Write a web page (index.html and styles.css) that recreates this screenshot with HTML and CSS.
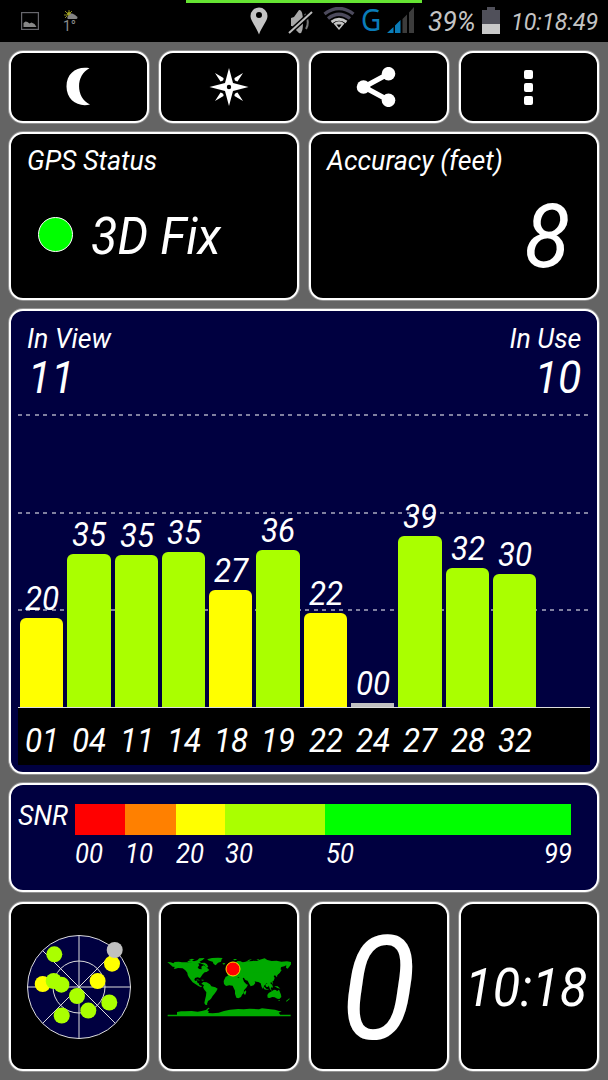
FILE: index.html
```html
<!DOCTYPE html>
<html lang="en">

<head>
    <meta charset="UTF-8">
    <meta name="viewport" content="width=device-width, initial-scale=1.0">
    <title>GPS Test</title>
    <link rel="stylesheet" href="styles.css">
</head>

<body>
    <header class="statusbar">
        <div class="progress"></div>
        <div class="notifications">
            <svg width="18" height="18" viewBox="0 0 18 18">
                <rect x=".6" y=".6" width="16.8" height="16.8" fill="none" stroke="#66666c" stroke-width="1.2"/>
                <path d="M2.500 15v-4l2-1.500 2 .5 2 1.500 2-1 3 1.500 2 3z" fill="#888"/>
            </svg>
            <div class="weather">
                <svg width="14" height="9" viewBox="0 0 14 9">
                    <path d="M5 0v3M1 1l3 3M0 5h3M8 1L6 3M1 8l2-2" stroke="#8d8d20" stroke-width="1"/>
                    <circle cx="5" cy="4" r="2" fill="#a0a020"/>
                    <path d="M4 9a2 2 0 0 1 1-3.500a3 3 0 0 1 5-1a2 2 0 0 1 2 1.500a1.500 1.500 0 0 1 0 3z" fill="#858585"/>
                </svg>
                <span>1°</span>
            </div>
        </div>
        <div class="system">
            <svg class="pin" width="18" height="28" viewBox="0 0 18 28">
                <path fill-rule="evenodd" d="M9 .5A8.500 8.500 0 0 1 17.500 9C17.500 14 11.500 20 9 27.500C6.500 20 .5 14 .5 9A8.500 8.500 0 0 1 9 .5zM9 5a3 3 0 1 0 0 6a3 3 0 0 0 0-6z" fill="#c4c4c4"/>
            </svg>
            <svg class="mute" width="25" height="26" viewBox="0 0 25 26">
                <path d="M3 9l3-1 5-7q4-1 4 12t-4 11l-7-7H3z" fill="#a8a8a8"/>
                <path d="M17 5q5 8 1 15" fill="none" stroke="#777" stroke-width="2"/>
                <path d="M1 24L24 3" stroke="#000" stroke-width="5"/>
                <path d="M1 24L24 3" stroke="#bbb" stroke-width="2"/>
            </svg>
            <svg class="wifi" width="32" height="24" viewBox="0 0 32 24">
                <path d="M1.500 7Q16-4 30.500 7M5 11.500Q16 3 27 11.500" fill="none" stroke="#4c4a5c" stroke-width="3.400"/>
                <path d="M8.500 15Q16 9.500 23.500 15" fill="none" stroke="#c4c4c4" stroke-width="2.800"/>
                <path d="M10.500 16.500Q16 12 21.500 16.500L16 23z" fill="#c4c4c4"/>
                <path d="M13.500 17.500h5L16 20.800z" fill="#000"/>
            </svg>
            <span class="net">G</span>
            <svg class="signal" width="28" height="26" viewBox="0 0 28 26">
                <path d="M0 26l6.500-6V26zM8 26V18.500L13.500 13V26z" fill="#0a7cb8"/>
                <path d="M15.500 26V12L20 7.500V26zM22 26V5.500L27 0V26z" fill="#3c3c3c"/>
            </svg>
            <span class="percent">39%</span>
            <svg class="battery" width="18" height="27" viewBox="0 0 18 27">
                <path d="M5 0h8v3h5v14H0V3h5z" fill="#50505a"/>
                <path d="M0 17h18v10H0z" fill="#c8c8c8"/>
            </svg>
            <span class="time">10:18:49</span>
        </div>
    </header>

    <main class="dashboard">
        <button class="panel action">
            <svg width="26" height="40" viewBox="0 0 26 40">
                <path d="M25.500 1.300C13 -1 2.500 6 2.500 19.500S14 40.500 26 37.500C11.500 31 11.500 8 25.500 1.300z" fill="#fff"/>
            </svg>
        </button>
        <button class="panel action compass">
            <svg width="40" height="40" viewBox="-20 -20 40 40">
                <path fill-rule="evenodd" d="M0-19L4-4L19.500 0L4 4L0 19L-4 4L-19.500 0L-4-4zM0-2.200a2.200 2.200 0 1 0 0 4.400a2.200 2.200 0 0 0 0-4.400z" fill="#fff"/>
                <path d="M-14-14L-5.500-9Q-5-6-8.500-5.500zM14-14L5.500-9Q5-6 8.500-5.500zM-14 14L-5.500 9Q-5 6-8.500 5.500zM14 14L5.500 9Q5 6 8.500 5.500z" fill="#fff"/>
            </svg>
        </button>
        <button class="panel action share">
            <svg width="40" height="40" viewBox="0 0 40 40">
                <path d="M33 6.500L8 20L33 33.500" fill="none" stroke="#fff" stroke-width="5.200"/>
                <circle cx="7.500" cy="20" r="6.800" fill="#fff"/>
                <circle cx="32.500" cy="6.700" r="6.800" fill="#fff"/>
                <circle cx="32.500" cy="33.300" r="6.800" fill="#fff"/>
            </svg>
        </button>
        <button class="panel action menu">
            <i></i><i></i><i></i>
        </button>

        <section class="panel wide status">
            <h2 class="label">GPS Status</h2>
            <div class="fix"><span class="dot"></span><span class="fix-text">3D Fix</span></div>
        </section>
        <section class="panel wide accuracy">
            <h2 class="label">Accuracy (feet)</h2>
            <div class="feet">8</div>
        </section>

        <section class="panel full chart">
            <div class="counts">
                <div><h2 class="label">In View</h2><div class="count in-view">11</div></div>
                <div class="in-use"><h2 class="label">In Use</h2><div class="count">10</div></div>
            </div>
            <div class="plot">
                <div class="grid-lines"><hr><hr><hr></div>
                <div class="bars">
                    <div class="sat"><span>20</span><div class="bar mid" style="height: 89px"></div></div>
                    <div class="sat"><span>35</span><div class="bar good" style="height: 153px"></div></div>
                    <div class="sat"><span>35</span><div class="bar good" style="height: 152px"></div></div>
                    <div class="sat"><span>35</span><div class="bar good" style="height: 154.6px"></div></div>
                    <div class="sat"><span>27</span><div class="bar mid" style="height: 117.3px"></div></div>
                    <div class="sat"><span>36</span><div class="bar good" style="height: 157px"></div></div>
                    <div class="sat"><span>22</span><div class="bar mid" style="height: 94px"></div></div>
                    <div class="sat"><span>00</span><div class="bar none" style="height: 3.6px"></div></div>
                    <div class="sat"><span>39</span><div class="bar good" style="height: 170.8px"></div></div>
                    <div class="sat"><span>32</span><div class="bar good" style="height: 139.3px"></div></div>
                    <div class="sat"><span>30</span><div class="bar good" style="height: 132.6px"></div></div>
                </div>
            </div>
            <div class="ids">
                <span>01</span><span>04</span><span>11</span><span>14</span><span>18</span><span>19</span><span>22</span><span>24</span><span>27</span><span>28</span><span>32</span>
            </div>
        </section>

        <section class="panel full snr">
            <h2 class="label">SNR</h2>
            <div class="scale">
                <div class="step s0"></div><div class="step s10"></div><div class="step s20"></div><div class="step s30"></div><div class="step s50"></div>
                <span>00</span><span>10</span><span>20</span><span>30</span><span class="ends"><b>50</b><b>99</b></span>
            </div>
        </section>

        <section class="panel tile radar">
            <svg width="104" height="104" viewBox="-52 -52 104 104">
                <g fill="none" stroke="#ddd" stroke-width="1">
                    <circle r="51.500" fill="#000040"/>
                    <circle r="26"/>
                    <path d="M-51.500 0H51.500M0-51.500V51.500M-36.400-36.400L36.400 36.400M36.400-36.400L-36.400 36.400"/>
                </g>
                <g fill="#ff0">
                    <circle cx="-36.300" cy="-3" r="8"/>
                    <circle cx="33" cy="-23.300" r="8"/>
                    <circle cx="18.600" cy="-6" r="8"/>
                </g>
                <g fill="#af0">
                    <circle cx="-24.700" cy="-32.700" r="8"/>
                    <circle cx="-25.300" cy="-6" r="8"/>
                    <circle cx="-17.600" cy="-2.300" r="8"/>
                    <circle cx="-2" cy="9" r="8"/>
                    <circle cx="30.300" cy="15.500" r="8"/>
                    <circle cx="9.300" cy="23.600" r="8"/>
                    <circle cx="-17.300" cy="28.600" r="8"/>
                </g>
                <circle cx="35.700" cy="-37" r="8" fill="#c0c0c0"/>
            </svg>
        </section>
        <section class="panel tile map">
            <svg width="124" height="62" viewBox="37 79 372 186">
                <g fill="#00aa00">
                    <!-- Americas -->
                    <path d="M38 97l10 1 8 3 4-4 12-1 10 2 16 0 14 2 10-2 8 3 4 6-5 6 4 5 8 1-1-8 6-4 8 4 6 6 4 4-8 6-6 1-6 6-5 7-3 4-7-2-8 2-2 6 4 3 5-2-1 6 5 3 2 5 6 3 3-1-4 5-8-4-8-5-9-6-6-8-6-8-3-6-1-7-6-7-8-6-14-1-10 3-3-3 5-3-8-1-5-4z"/>
                    <path d="M98 95l12-4 8 4 10-3 6-6 16-1-6 6-10 5 6 4 10-1 7 5 4 8-5 2-8-9-12-4-8 1-14-2-12-1zM102 90l10-3 8 3-9 2zM160 88l12-3 18-1 14 1-3 4-2 7-9 3-7 8-6-4-3-7-10-3-6-3z"/>
                    <path d="M124 148l8 2 4 3-6-1zM140 150l6 0 2 2-6 1zM140 162l6-5 10 1 10 6 4 6 12 3 7 4-4 8-6 8-5 6-5 8-4 4-5 3-2 6-1 3 1 3-6-1-3-5 2-10 3-12 1-10-7-9-3-7 3-5z"/>
                    <!-- Europe, Asia and Africa -->
                    <path d="M217 132l8-1 1-5-5-3 8-4 6-5 4-4-4-4 5-5 9-7 9 1 5 3 6 2 10-2 10-1 7-4 11 1 8-4 15-4 8 5 13 3 15-1 14 3 17-1 13 2 16 0 3 3-7 2-4 4-10-1-3 5-6 7-5-3 1-7-6 3-9 2-4 6 5 3-6 9-7 6-1 7-6-6-4 2 3 6-3 8-9 5 0 4 6 6 1 7-4-4-3 5 4 8-6-5-3-9-3-8-4-2-9 10-2 8-4-6-3-11-7-4-6-1-5-1 2 5-5 7-9 3-6-11-3-6-5-1-4-3-2-5-6 2 1 7-6-6-6-5-4 4-6 5-7 4-7-1z"/>
                    <path d="M213 141l12-4 11-1 1 5 9 3 11 0 7 1 4 11 7 8 5 1-4 8-8 9-1 9-5 4-3 7-8 4-6-2-4-12 0-9-5-10-2-5-10-1-10 2-6-6-1-9zM268 187l5-5 2 4-3 9-4-1zM217 117l4-6 3 8-6 3zM203 101l6-1 3 2-5 3zM236 88l9 0 1 3-8 1zM274 96l9-6 9-2-10 7zM305 89l9 0-3 3zM376 115l3-6-1 13zM363 132l8-6 4 1-7 8zM322 164l8 9 6 6 8 1-6 1-9-2zM332 164l9-5 4 5-5 8-6-1zM346 166l7-2-3 10-4-1zM348 152l5 2 2 9-4-3zM359 169l10 1 8 7-9-2z"/>
                    <path d="M255 100l24-5 45-2 50 4-20 22-22 8-50 4-27-9z"/>
                    <!-- Oceania -->
                    <path d="M342 190l9-5 7-5 6 1 3 4 6-5 3 8 3 7 1 7-6 6-6-1-8-4-7-1-8 3-6-1-1-8zM371 211l5 0-3 4zM394 214l10-8 1 2-9 8z"/>
                    <!-- Antarctica -->
                    <path d="M39 255h28l0-8 12-2 12 0 20-1 18 2 12-2 13-3 7-7 4 2-7 6 5 4-3 4 14 1 18-2 16-5 18-4 24-2 17 1 18-2 28 2 9-3 25 3 14 1 12 4 8 1-9 4 5 6H408v5H39z"/>
                </g>
                <circle cx="235" cy="118" r="21" fill="#f00" stroke="#fd0" stroke-width="3"/>
            </svg>
        </section>
        <section class="panel tile speed"><span>0</span></section>
        <section class="panel tile clock"><span>10:18</span></section>
    </main>
</body>

</html>
```
FILE: styles.css
```css
* {
    box-sizing: border-box;
}

body {
    margin: 0;
    width: 608px;
    height: 1080px;
    overflow: hidden;
    background-color: #646464;
    color: #fff;
    font-family: Roboto, sans-serif;
    font-style: italic;
}

svg {
    display: block;
    flex: none;
}

.statusbar {
    position: relative;
    display: flex;
    justify-content: space-between;
    height: 42px;
    background-color: #000;
    color: #c4c4c4;
}

.progress {
    position: absolute;
    top: 0;
    left: 186px;
    width: 236px;
    height: 3px;
    background-color: #66e433;
}

.notifications {
    display: flex;
    gap: 24px;
    padding: 12px 0 0 21px;
}

.weather {
    margin-top: -2px;
    font-size: 14px;
    font-style: normal;
    line-height: 14px;
    color: #8c8c8c;
}

.weather svg {
    margin-left: 1px;
}

.system {
    display: flex;
    align-items: flex-start;
    padding-top: 7px;
    padding-right: 7px;
}

.mute {
    margin: 2px 0 0 20px;
}

.wifi {
    margin-left: 10px;
}

.net {
    margin-left: 6px;
    width: 20px;
    font-family: "Noto Sans", sans-serif;
    font-style: normal;
    font-size: 30px;
    line-height: 26px;
    transform: scaleX(0.93);
    transform-origin: 0 0;
    color: #0a7cb8;
}

.signal {
    margin-left: 6px;
}

.percent {
    margin-left: 13px;
    width: 49px;
    font-size: 27px;
    line-height: 31px;
    transform: scaleX(0.98);
    transform-origin: 0 0;
}

.battery {
    margin-left: 5px;
}

.time {
    margin-left: 11px;
    width: 90px;
    font-size: 24px;
    line-height: 31px;
    transform: scaleX(0.97);
    transform-origin: 0 0;
}

.dashboard {
    display: grid;
    grid-template-columns: repeat(4, 140px);
    grid-template-rows: 72px 168px 465px 109px 170px;
    gap: 9px 10px;
    padding: 9px;
}

.panel {
    border: 2px solid #fff;
    border-radius: 14px;
    background-color: #000;
    box-shadow: 0 0 0 1px rgba(255, 255, 255, 0.3);
}

.wide {
    grid-column: span 2;
}

.full {
    grid-column: span 4;
    background-color: #000040;
}

.label {
    margin: 0;
    font-size: 28px;
    font-weight: 400;
    line-height: 32px;
    white-space: nowrap;
    transform: scaleX(0.955);
    transform-origin: 0 0;
}

.action {
    display: flex;
    align-items: center;
    justify-content: center;
    padding: 0 5px 0 0;
}

.compass {
    padding-right: 1px;
}

.share {
    padding-right: 6px;
}

.menu {
    flex-direction: column;
    gap: 4px;
    padding-right: 2px;
}

.menu i {
    width: 9px;
    height: 9px;
    border-radius: 2px;
    background-color: #fff;
}

.status,
.accuracy {
    padding: 11px 16px;
}

.fix {
    display: flex;
    align-items: center;
    margin: 27px 0 0 11px;
}

.dot {
    width: 35px;
    height: 35px;
    border: 1.5px solid #fff;
    border-radius: 50%;
    background-color: #0f0;
}

.fix-text {
    margin-left: 18px;
    padding-top: 3px;
    margin-bottom: -3px;
    font-size: 51px;
    line-height: 60px;
    transform: scaleX(0.95);
    transform-origin: 0 0;
}

.feet {
    margin: 10px 11px 0 0;
    text-align: right;
    font-size: 88px;
    line-height: 100px;
    transform: scaleX(0.96);
    transform-origin: 100% 0;
}

.chart {
    display: flex;
    flex-direction: column;
    padding: 10px 7px 7px;
}

.counts {
    display: flex;
    justify-content: space-between;
    height: 83px;
    padding: 2px 9px 0 9px;
}

.count {
    font-size: 45px;
    line-height: 46px;
    transform: scaleX(0.95);
    transform-origin: 0 0;
}

.in-view {
    padding-left: 1px;
}

.in-use {
    text-align: right;
}

.in-use .label,
.in-use .count {
    transform-origin: 100% 0;
}

.plot {
    position: relative;
    height: 304px;
    border-bottom: 1px solid #ddd;
}

.grid-lines {
    position: absolute;
    inset: 10px 0 0;
}

.grid-lines hr {
    height: 2px;
    margin: 0 0 95.500px;
    border: 0;
    background: repeating-linear-gradient(90deg, #8080a0 0 4px, transparent 4px 8.450px);
}

.bars {
    position: relative;
    display: flex;
    align-items: flex-end;
    gap: 4px;
    height: 100%;
    padding-left: 2px;
}

.sat {
    width: 43.300px;
    text-align: center;
}

.sat span {
    display: block;
    padding-left: 1px;
    font-size: 33px;
    line-height: 39px;
    transform: scaleX(0.95);
}

.bar {
    border-radius: 6px 6px 0 0;
}

.good {
    background-color: #af0;
}

.mid {
    background-color: #ff0;
}

.none {
    border-radius: 0;
    background-color: #c0c0c0;
}

.ids {
    display: flex;
    gap: 4px;
    height: 57px;
    padding-left: 2px;
    background-color: #000;
}

.ids span {
    width: 43.300px;
    padding-left: 1px;
    text-align: center;
    font-size: 33px;
    line-height: 66px;
    transform: scaleX(0.95);
}

.snr {
    display: flex;
    padding: 19px 0 0 7px;
}

.snr .label {
    width: 57px;
    line-height: 24px;
}

.scale {
    display: grid;
    grid-template-columns: 50px 51px 49px 100px 246px;
    grid-template-rows: 31px 38px;
    font-size: 27px;
    line-height: 38px;
}

.scale span {
    transform: scaleX(0.95);
    transform-origin: 0 0;
}

.ends {
    display: flex;
    justify-content: space-between;
    width: 260px;
    padding-left: 1px;
}

.ends b {
    font-weight: 400;
}

.s0 {
    background-color: #f00;
}

.s10 {
    background-color: #ff8000;
}

.s20 {
    background-color: #ff0;
}

.s30 {
    background-color: #af0;
}

.s50 {
    background-color: #0f0;
}

.tile {
    display: flex;
    align-items: center;
    justify-content: center;
    margin-top: 1px;
    height: 169px;
}

.map {
    padding-right: 1px;
}

.speed span {
    padding-top: 5px;
    font-size: 145px;
    line-height: 160px;
    transform: scaleX(0.96);
}

.clock span {
    padding: 2px 6px 0 0;
    font-size: 53px;
    line-height: 60px;
    transform: scaleX(0.95);
}
```
